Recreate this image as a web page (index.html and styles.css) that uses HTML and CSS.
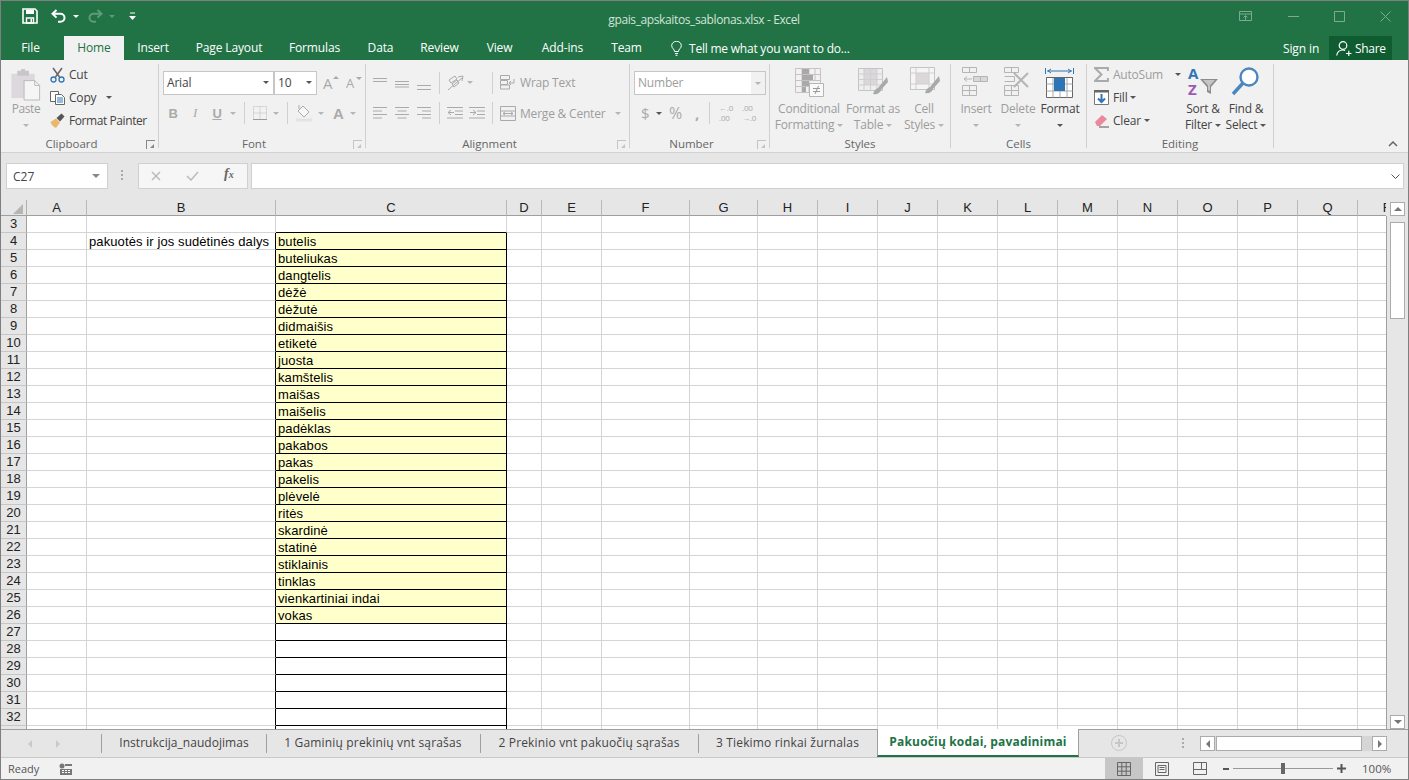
FILE: index.html
```html
<!DOCTYPE html>
<html>
<head>
    <title>gpais_apskaitos_sablonas.xlsx - Excel</title>
    <link rel="stylesheet" href="styles.css">
</head>
<body>
<div class="window">
    <!-- title bar -->
    <div class="titlebar">
        <div class="qat">
            <svg class="q-save" width="16" height="16" viewBox="0 0 16 16"><path d="M1 1h12l2 2v12H1z" fill="none" stroke="#fff" stroke-width="1.6"/><path d="M4 1.500h8v4.500H4z" fill="#fff"/><path d="M4.500 10h7v5h-7z" fill="none" stroke="#fff" stroke-width="1.400"/><path d="M8.500 11h1.500v3H8.500z" fill="#fff"/></svg>
            <svg class="q-undo" width="16" height="14" viewBox="0 0 16 14"><path d="M5.500 1 1.500 4.800l4 3.800M2 4.800h7.500a4 4 0 0 1 0 8H7" fill="none" stroke="#fff" stroke-width="2"/></svg>
            <span class="caret-w q-c1"></span>
            <svg class="q-redo" width="16" height="14" viewBox="0 0 16 14"><path d="M10.500 1l4 3.800-4 3.800M14 4.800H6.500a4 4 0 0 0 0 8H9" fill="none" stroke="#5f9a7b" stroke-width="2"/></svg>
            <span class="caret-w q-c2"></span>
            <svg class="q-more" width="7" height="9" viewBox="0 0 7 9"><path d="M1 1h5" stroke="#fff"/><path d="M0 4h7L3.500 8z" fill="#fff"/></svg>
        </div>
        <div class="doc-title">gpais_apskaitos_sablonas.xlsx - Excel</div>
        <div class="win-btns">
            <svg width="14" height="11" viewBox="0 0 14 11"><path d="M.5.500h12v9H.5zM.5 3h12M6.500 9V5M4.500 6.500l2-2 2 2" fill="none" stroke="#7fab94"/></svg>
            <svg width="11" height="11" viewBox="0 0 11 11"><path d="M0 5.500h11" stroke="#7fab94"/></svg>
            <svg width="11" height="11" viewBox="0 0 11 11"><path d="M.5.500h10v10H.5z" fill="none" stroke="#7fab94"/></svg>
            <svg width="11" height="11" viewBox="0 0 11 11"><path d="M.5.500l10 10M10.500.500l-10 10" stroke="#7fab94"/></svg>
        </div>
    </div>

    <!-- ribbon tabs -->
    <div class="tabs">
        <span class="tab t-file">File</span>
        <span class="tab t-home">Home</span>
        <span class="tab t-insert">Insert</span>
        <span class="tab t-layout">Page Layout</span>
        <span class="tab t-formulas">Formulas</span>
        <span class="tab t-data">Data</span>
        <span class="tab t-review">Review</span>
        <span class="tab t-view">View</span>
        <span class="tab t-addins">Add-ins</span>
        <span class="tab t-team">Team</span>
        <span class="tell">
            <svg width="11" height="15" viewBox="0 0 11 15"><path d="M3.500 10.500C3.500 8 .7 7.500.7 4.500a4.800 4.200 0 0 1 9.600 0c0 3-2.800 3.500-2.800 6zM4 12.500h3M4.500 14.300h2" fill="none" stroke="#fff"/></svg>
            Tell me what you want to do...
        </span>
        <span class="signin">Sign in</span>
        <span class="share">
            <svg width="16" height="15" viewBox="0 0 16 15"><circle cx="7" cy="4.500" r="3.800" fill="none" stroke="#fff" stroke-width="1.200"/><path d="M.7 14.500c.5-3.500 3-5.500 6.300-5.500 1 0 1.500.1 2.200.4M10 12.500h5.500M12.800 9.800v5.200" fill="none" stroke="#fff" stroke-width="1.200"/></svg>
            Share
        </span>
    </div>

    <!-- ribbon -->
    <div class="ribbon">
        <div class="group g-clipboard">
            <div class="body">
                <div class="big paste">
                    <svg width="32" height="36" viewBox="0 0 32 36"><path d="M1 8h24v25H1z" fill="#dcd8dc"/><path d="M7 5h4V3h4v2h4v5H7z" fill="#c9c5c9"/><path d="M14 15h11l5 5v15H14z" fill="#f5f5f5" stroke="#b9b9b9"/><path d="M25 15v5h5" fill="none" stroke="#b9b9b9"/></svg>
                    <span class="dim">Paste</span>
                    <span class="caret-g"></span>
                </div>
                <div class="smalls">
                    <div class="small"><svg width="15" height="16" viewBox="0 0 15 16"><path d="M3 1l6.500 9M12 1 5.500 10" stroke="#666" stroke-width="1.500"/><circle cx="3.500" cy="12.500" r="2.500" fill="none" stroke="#2e75b6" stroke-width="1.300"/><circle cx="11.500" cy="12.500" r="2.500" fill="none" stroke="#2e75b6" stroke-width="1.300"/></svg><span>Cut</span></div>
                    <div class="small"><svg width="15" height="15" viewBox="0 0 15 15"><path d="M.5 1.500h8v10h-8z" fill="#fff" stroke="#666"/><path d="M5.500 4.500h6l3 3v7h-9z" fill="#fff" stroke="#666"/><path d="M7 8h6M7 10h6M7 12h6" stroke="#2e75b6"/></svg><span>Copy</span><i class="caret-d cp"></i></div>
                    <div class="small"><svg width="15" height="15" viewBox="0 0 15 15"><path d="M.5 9 6 5.500l4 4L6 15c-1-.5-2-1-3.500-2.500C1.500 11.500 1 10.500.5 9z" fill="#e8b96a"/><path d="M6.500 5 11.500.5l3 3-4.500 5z" fill="#555"/></svg><span class="painter">Format Painter</span></div>
                </div>
            </div>
            <div class="label launchable">Clipboard<i class="launch"></i></div>
        </div>

        <div class="group g-font">
            <div class="body col">
                <div class="row r-top">
                    <div class="select font-name"><span>Arial</span><i class="caret-d"></i></div>
                    <div class="select font-size"><span>10</span><i class="caret-d"></i></div>
                    <span class="grow-a">A<i class="tri-up"></i></span>
                    <span class="shrink-a">A<i class="tri-down"></i></span>
                </div>
                <div class="row r-bot font-tools">
                    <b class="fmt f-b">B</b>
                    <em class="fmt f-i">I</em>
                    <u class="fmt f-u">U</u>
                    <i class="caret-g f-c1"></i>
                    <span class="sep f-s1"></span>
                    <svg class="f-border" width="14" height="14" viewBox="0 0 14 14"><path d="M.5.500h13v13H.5zM7 .5v13M.5 7h13" fill="none" stroke="#bbb" stroke-dasharray="1 1"/><path d="M0 13.500h14" stroke="#999"/></svg>
                    <i class="caret-g f-c2"></i>
                    <span class="sep f-s2"></span>
                    <svg class="f-fill" width="17" height="17" viewBox="0 0 17 17"><path d="M7 1l6 6-5 5-6-6z" fill="#f7f7f7" stroke="#aaa"/><path d="M3 0v4" stroke="#aaa"/><path d="M0 13.500h16v3H0z" fill="#e3e3e3"/></svg>
                    <i class="caret-g f-c3"></i>
                    <b class="font-a">A</b>
                    <i class="caret-g f-c4"></i>
                </div>
            </div>
            <div class="label launchable">Font<i class="launch off"></i></div>
        </div>

        <div class="group g-align">
            <div class="body col">
                <div class="row r-top al-top">
                    <svg class="al a1" width="14" height="14" viewBox="0 0 14 14"><path d="M0 2.500h14M0 5.500h14" stroke="#aaa"/></svg>
                    <svg class="al a2" width="14" height="14" viewBox="0 0 14 14"><path d="M0 5.500h14M0 8.500h14M0 11h14" stroke="#aaa"/></svg>
                    <svg class="al a3" width="14" height="14" viewBox="0 0 14 14"><path d="M0 9.500h14M0 13.500h14" stroke="#aaa"/></svg>
                    <span class="sep a-s1"></span>
                    <svg class="a-orient" width="17" height="16" viewBox="0 0 17 16"><path d="M1 15 15 3M11 2l5-1-1 5" fill="none" stroke="#aaa"/><path d="M2 5l6-4 2 3-6 4zM5 9l5-4 2 3-5 4z" fill="none" stroke="#aaa"/></svg>
                    <i class="caret-g a-c"></i>
                    <span class="sep a-s2"></span>
                    <svg class="a-wrap" width="16" height="15" viewBox="0 0 16 15"><path d="M.5.500h9v4h-9zM.5 5.500h7v4h-7zM.5 10h9v4h-9zM9 8h5V4M9 8l2-2M9 8l2 2" fill="none" stroke="#aaa"/></svg>
                    <span class="dim a-text">Wrap Text</span>
                </div>
                <div class="row r-bot">
                    <svg class="al a1" width="14" height="12" viewBox="0 0 14 12"><path d="M0 .5h14M0 4h9M0 7.500h14M0 11h9" stroke="#aaa"/></svg>
                    <svg class="al a2" width="14" height="12" viewBox="0 0 14 12"><path d="M0 .5h14M2.500 4h9M0 7.500h14M2.500 11h9" stroke="#aaa"/></svg>
                    <svg class="al a3" width="14" height="12" viewBox="0 0 14 12"><path d="M0 .5h14M5 4h9M0 7.500h14M5 11h9" stroke="#aaa"/></svg>
                    <span class="sep a-s1"></span>
                    <svg class="a-ind1" width="16" height="12" viewBox="0 0 16 12"><path d="M0 .5h16M8 4h8M8 7.500h8M0 11h16M7 5.500H1M4 3 1 5.500 4 8" fill="none" stroke="#aaa"/></svg>
                    <svg class="a-ind2" width="16" height="12" viewBox="0 0 16 12"><path d="M0 .5h16M8 4h8M8 7.500h8M0 11h16M1 5.500h6M4 3l3 2.500L4 8" fill="none" stroke="#aaa"/></svg>
                    <span class="sep a-s3"></span>
                    <svg class="a-merge" width="16" height="15" viewBox="0 0 16 15"><path d="M.5.500h15v14H.5zM.5 5h15M.5 10h15M3 7.500h10M5 5.800 3 7.500l2 1.700M11 5.800l2 1.700-2 1.700" fill="none" stroke="#aaa"/></svg>
                    <span class="dim a-text">Merge &amp; Center</span>
                    <i class="caret-g a-c2"></i>
                </div>
            </div>
            <div class="label launchable">Alignment<i class="launch off"></i></div>
        </div>

        <div class="group g-number">
            <div class="body col">
                <div class="row r-top">
                    <div class="select num-select"><span>Number</span><i class="num-arrow"><i class="caret-g"></i></i></div>
                </div>
                <div class="row r-bot">
                    <span class="n-dollar">$</span>
                    <i class="caret-d n-c"></i>
                    <span class="n-pct">%</span>
                    <span class="n-comma">,</span>
                    <span class="sep n-s"></span>
                    <span class="n-dec">←.0<br>.00</span>
                    <span class="n-dec n-dec2">.00<br>→.0</span>
                </div>
            </div>
            <div class="label launchable">Number<i class="launch off"></i></div>
        </div>

        <div class="group g-styles">
            <div class="body">
                <div class="big b-cond">
                    <svg width="32" height="36" viewBox="0 0 32 36"><g transform="translate(2 4)"><path d="M.5.500h25v24H.5z" fill="#f4f0f4" stroke="#c4c4c4"/><path d="M7 .5v24M14 .5v24M20 .5v12M.5 6.500h25M.5 12.500h25M.5 18.500h14" stroke="#c4c4c4"/><path d="M7 1h7v5H7zM7 7h11v5H7zM7 13h7v5H7zM7 19h4v5H7z" fill="#a9a9a9"/><path d="M14.500 15.500h14v13h-14z" fill="#f9f9f9" stroke="#b5b5b5"/><path d="M18 20.500h7M18 23.500h7M23.500 18l-3.500 8" stroke="#999"/></g></svg>
                    <span class="dim">Conditional</span><span class="dim">Formatting<i class="caret-g in"></i></span>
                </div>
                <div class="big b-table">
                    <svg width="32" height="36" viewBox="0 0 32 36"><g transform="translate(1 4)"><path d="M.5.500h24v22H.5z" fill="#eee" stroke="#c4c4c4"/><path d="M6 1h13v16H6z" fill="#dbd7db"/><path d="M6 .5v22M12.500 .5v22M19 .5v22M.5 6h24M.5 11.500h24M.5 17h24" stroke="#cfcfcf"/><path d="M29 9 20 20l2 3 8-9zM20 20c-3 1-4 3-5 6 4 1 7-1 8-4z" fill="#a9a9a9"/></g></svg>
                    <span class="dim">Format as</span><span class="dim">Table<i class="caret-g in"></i></span>
                </div>
                <div class="big b-cell">
                    <svg width="32" height="36" viewBox="0 0 32 36"><g transform="translate(2 3)"><path d="M.5.500h24v22H.5z" fill="#f5f5f5" stroke="#c4c4c4"/><path d="M6 6h13v11H6z" fill="#dbd7db"/><path d="M6 .5v22M19 .5v22M.5 6h24M.5 17h24" stroke="#cfcfcf"/><path d="M29 9 20 20l2 3 8-9zM20 20c-3 1-4 3-5 6 4 1 7-1 8-4z" fill="#a9a9a9"/></g></svg>
                    <span class="dim">Cell</span><span class="dim">Styles<i class="caret-g in"></i></span>
                </div>
            </div>
            <div class="label">Styles</div>
        </div>

        <div class="group g-cells">
            <div class="body">
                <div class="big b-cellbtn">
                    <svg width="32" height="36" viewBox="0 0 32 36"><g fill="none" stroke="#b5b5b5" transform="translate(2 3)"><path d="M.5.500h14v5h-14zM7.500 .5v5M.5 18.500h14v10h-14zM7.500 18.500v10M.5 23.500h14"/><path d="M11.500 9.500h14v5h-14z" fill="#d8d8d8"/><path d="M18.500 9.500v5M10 12H2M5 9.500 2 12l3 2.500"/></g></svg>
                    <span class="dim">Insert</span><i class="caret-g"></i>
                </div>
                <div class="big b-cellbtn">
                    <svg width="32" height="36" viewBox="0 0 32 36"><g fill="none" stroke="#b5b5b5" transform="translate(2 3)"><path d="M.5.500h14v5h-14zM7.500 .5v5M.5 18.500h14v10h-14zM7.500 18.500v10M.5 23.500h14M.5 9.500h10v5H.5"/><path d="M10 6 24 20M24 6 10 20" stroke-width="2"/></g></svg>
                    <span class="dim">Delete</span><i class="caret-g"></i>
                </div>
                <div class="big b-cellbtn">
                    <svg width="30" height="36" viewBox="0 0 30 36"><path d="M.5 4v6M28.500 4v6M2 7h25M6 5 3 7l3 2M23 5l3 2-3 2" fill="none" stroke="#2e75b6"/><path d="M1.500 13.500h26v20h-26z" fill="#fff" stroke="#666"/><path d="M8 13.500v20M15 13.500v20M22 13.500v20M1.500 20h26M1.500 27h26" stroke="#aaa"/><path d="M1.500 13.500h26" stroke="#666" fill="none"/><path d="M9 14h11v13H9z" fill="#2e75b6"/></svg>
                    <span class="dark">Format</span><i class="caret-d"></i>
                </div>
            </div>
            <div class="label">Cells</div>
        </div>

        <div class="group g-edit">
            <div class="body">
                <div class="smalls edit-list">
                    <div class="small"><svg width="15" height="15" viewBox="0 0 15 15"><path d="M14 4V1H1l6.500 6.500L1 14h13v-3" fill="none" stroke="#aaa" stroke-width="2"/></svg><span class="dim">AutoSum</span><i class="caret-d ed"></i></div>
                    <div class="small"><svg width="15" height="15" viewBox="0 0 15 15"><path d="M.5.500h14v14H.5z" fill="#fff" stroke="#777"/><path d="M0 0h15v2.500H0z" fill="#666"/><path d="M7.500 4v8M4 8.500l3.500 3.500L11 8.500" fill="none" stroke="#2e75b6" stroke-width="2"/></svg><span>Fill</span><i class="caret-d tight"></i></div>
                    <div class="small"><svg width="15" height="15" viewBox="0 0 15 15"><path d="M1 9l7-7 5 4-7 7H3z" fill="#e88a9c"/><path d="M5 14h10" stroke="#555"/></svg><span>Clear</span><i class="caret-d tight"></i></div>
                </div>
                <div class="big b-sort">
                    <svg width="32" height="36" viewBox="0 0 32 36"><path d="M13 15h18l-7 8v7l-4-2v-5z" fill="#8c8c8c"/><path d="M16 16h12l-5 5.500V27l-2-1v-4.500z" fill="#c5c5c5"/><text x="1" y="15" class="az a-blue">A</text><text x="1" y="31" class="az z-purple">Z</text></svg>
                    <span>Sort &amp;</span><span>Filter<i class="caret-d in"></i></span>
                </div>
                <div class="big b-find">
                    <svg width="32" height="36" viewBox="0 0 32 36"><circle cx="19" cy="13" r="8.500" fill="#fff" stroke="#4a86c0" stroke-width="2.400"/><path d="M13 19 3 30" stroke="#4a86c0" stroke-width="3.400"/></svg>
                    <span>Find &amp;</span><span>Select<i class="caret-d in"></i></span>
                </div>
            </div>
            <div class="label">Editing</div>
        </div>
        <svg class="collapse" width="10" height="6" viewBox="0 0 10 6"><path d="M1 5l4-4 4 4" fill="none" stroke="#666" stroke-width="1.500"/></svg>
    </div>

    <!-- formula bar -->
    <div class="formula">
        <div class="namebox"><span>C27</span><i class="name-arrow"></i></div>
        <div class="grip"></div>
        <div class="fx-box">
            <svg width="10" height="10" viewBox="0 0 10 10"><path d="M1 1l8 8M9 1 1 9" stroke="#bbb" stroke-width="1.500"/></svg>
            <svg width="13" height="10" viewBox="0 0 13 10"><path d="M1 5l4 4 7-8" fill="none" stroke="#bbb" stroke-width="1.500"/></svg>
            <span class="fx">f<span class="fx-x">x</span></span>
        </div>
        <div class="input"><svg width="9" height="5" viewBox="0 0 9 5"><path d="M.5.500l4 4 4-4" fill="none" stroke="#555"/></svg></div>
    </div>

    <!-- sheet -->
    <div class="sheet">
        <div class="grid" id="grid"></div>
        <div class="edge"></div>
        <div class="vscroll">
            <div class="sb-btn"><i class="tri-u"></i></div>
            <div class="sb-thumb"></div>
            <div class="sb-btn sb-down"><i class="tri-d"></i></div>
        </div>
    </div>

    <!-- sheet tabs -->
    <div class="sheetbar">
        <div class="nav-arrows"><i class="tri-l"></i><i class="tri-r"></i></div>
        <div class="stab st1">Instrukcija_naudojimas</div>
        <div class="stab st2">1 Gaminių prekinių vnt sąrašas</div>
        <div class="stab st3">2 Prekinio vnt pakuočių sąrašas</div>
        <div class="stab st4">3 Tiekimo rinkai žurnalas</div>
        <div class="stab active">Pakuočių kodai, pavadinimai</div>
        <svg class="add" width="16" height="16" viewBox="0 0 16 16"><circle cx="8" cy="8" r="7.500" fill="none" stroke="#c6c6c6"/><path d="M8 4v8M4 8h8" stroke="#c6c6c6" stroke-width="2"/></svg>
        <div class="grip g2"></div>
        <div class="hscroll">
            <div class="sb-btn h"><i class="tri-lk"></i></div>
            <div class="h-thumb"></div>
            <div class="sb-btn h h-end"><i class="tri-rk"></i></div>
        </div>
    </div>

    <!-- status bar -->
    <div class="status">
        <span class="ready">Ready</span>
        <svg class="macro" width="13" height="12" viewBox="0 0 13 12"><circle cx="3" cy="3" r="2.500" fill="#777"/><path d="M6 1h7v2H6zM1 6h12v6H1z" fill="#777"/><path d="M3 7.500h2M6 7.500h2M9 7.500h2M3 9.500h2M6 9.500h2M9 9.500h2" stroke="#fff"/></svg>
        <div class="views">
            <span class="view on"><svg width="14" height="14" viewBox="0 0 14 14"><path d="M.5.500h13v13H.5zM4.800 .5v13M9.200 .5v13M.5 4.800h13M.5 9.200h13" fill="none" stroke="#666"/></svg></span>
            <span class="view"><svg width="14" height="14" viewBox="0 0 14 14"><path d="M.5.500h13v13H.5z" fill="none" stroke="#666"/><path d="M3 3.500h8v7H3zM4.500 5.500h5M4.500 7.500h5" fill="none" stroke="#666"/></svg></span>
            <span class="view"><svg width="14" height="14" viewBox="0 0 14 14"><path d="M.5.500h13v12H.5zM8.500 .5v7H.5M8.500 7.500h5" fill="none" stroke="#666"/></svg></span>
        </div>
        <div class="zoom">
            <span class="z-minus"></span>
            <div class="z-track"><span class="z-thumb"></span></div>
            <svg width="9" height="9" viewBox="0 0 9 9"><path d="M0 4.500h9M4.500 0v9" stroke="#555" stroke-width="2"/></svg>
            <span class="z-val">100%</span>
        </div>
    </div>
</div>
<script src="script.js"></script>
</body>
</html>
```

FILE: styles.css
```css
* {
    box-sizing: border-box;
}
html, body {
    margin: 0;
    height: 100%;
    overflow: hidden;
}
body {
    font-family: "Open Sans", "Noto Sans", sans-serif;
    font-size: 12px;
    color: #444;
}
i {
    font-style: normal;
}
.window {
    width: 1409px;
    height: 780px;
    border: 1px solid #7f7f7f;
    display: flex;
    flex-direction: column;
    background: #f1f1f1;
}

/* title bar */
.titlebar {
    height: 35px;
    background: #217346;
    display: flex;
    align-items: center;
    color: #d3e3da;
    position: relative;
}
.qat {
    width: 352px;
    display: flex;
    align-items: center;
    padding-left: 21px;
    height: 100%;
    padding-bottom: 5px;
}
.q-undo { margin-left: 13px; }
.q-c1 { margin-left: 6px; }
.q-redo { margin-left: 8px; }
.q-c2 { margin-left: 6px; border-top-color: #5f9a7b !important; }
.q-more { margin-left: 14px; }
.caret-w {
    width: 0;
    height: 0;
    border: 3px solid transparent;
    border-top: 3px solid #fff;
    border-bottom: 0;
}
.doc-title {
    flex: 1;
    text-align: center;
    padding: 2px 1px 0 0;
    letter-spacing: -.38px;
}
.win-btns {
    width: 352px;
    display: flex;
    justify-content: flex-end;
    align-items: center;
    gap: 35px;
    padding-right: 17px;
    padding-bottom: 4px;
}

/* ribbon tabs */
.tabs {
    height: 24px;
    background: #217346;
    display: flex;
    align-items: center;
    color: #fff;
    white-space: nowrap;
    letter-spacing: -.12px;
}
.tab {
    height: 100%;
    line-height: 23px;
    text-align: center;
    flex: none;
}
.t-file { width: 63px; padding-right: 4px; }
.t-home { width: 60px; background: #f1f1f1; color: #217346; }
.t-insert { width: 58px; }
.t-layout { width: 94px; }
.t-formulas { width: 77px; }
.t-data { width: 55px; }
.t-review { width: 63px; }
.t-view { width: 57px; }
.t-addins { width: 69px; }
.t-team { width: 59px; }
.tell {
    margin-left: 15px;
    display: flex;
    align-items: center;
    gap: 7px;
    width: 612px;
    letter-spacing: -.22px;
}
.signin {
    width: 45px;
}
.share {
    width: 63px;
    margin-left: 1px;
    height: 100%;
    background: #0f5c30;
    display: flex;
    align-items: center;
    gap: 3px;
    padding-left: 7px;
    letter-spacing: -.3px;
}

/* ribbon */
.ribbon {
    height: 93px;
    border-bottom: 1px solid #d2d2d2;
    padding-top: 4px;
    display: flex;
    position: relative;
    letter-spacing: -.2px;
}
.group {
    height: 84px;
    border-right: 1px solid #d0d0d0;
    flex: none;
    display: flex;
    flex-direction: column;
    position: relative;
}
.g-clipboard { width: 158px; }
.g-font { width: 207px; }
.g-align { width: 264px; }
.g-number { width: 140px; }
.g-styles { width: 181px; }
.g-cells { width: 136px; }
.g-edit { width: 187px; }
.body {
    height: 72px;
    display: flex;
}
.body.col {
    flex-direction: column;
    padding-top: 7px;
}
.label {
    text-align: center;
    line-height: 16px;
    height: 12px;
    color: #666;
    font-size: 11.5px;
    letter-spacing: 0;
}
.label.launchable {
    padding-right: 16px;
}
.launch {
    position: absolute;
    right: 3px;
    bottom: -1px;
    width: 9px;
    height: 9px;
    border-left: 1px solid #888;
    border-top: 1px solid #888;
}
.launch::after {
    content: "";
    display: block;
    margin: 3px 0 0 3px;
    width: 0;
    height: 0;
    border-left: 4px solid transparent;
    border-bottom: 4px solid #888;
}
.launch.off {
    border-color: #c4c4c4;
}
.launch.off::after {
    border-bottom-color: #c4c4c4;
}
.dim { color: #9d9d9d; }
.dark { color: #444; }
.big {
    flex: none;
    display: flex;
    flex-direction: column;
    align-items: center;
    line-height: 16px;
    white-space: nowrap;
}
.big svg {
    height: 36px;
    flex: none;
    margin-bottom: 1px;
}
.big > .caret-g, .big > .caret-d {
    margin-top: 7px;
}
.caret-g, .caret-d {
    display: inline-block;
    width: 0;
    height: 0;
    border-left: 3px solid transparent;
    border-right: 3px solid transparent;
    border-top: 3px solid #b5b5b5;
}
.caret-d {
    border-top-color: #555;
}
.in {
    margin-left: 3px;
    vertical-align: middle;
}
.tight {
    margin-left: -1px;
}
.paste { width: 32px; margin-left: 9px; letter-spacing: -.4px; }
.paste svg { margin-top: 2px; margin-bottom: 0; height: 35px; }
.smalls {
    margin-top: -1px;
    margin-left: 8px;
    display: flex;
    flex-direction: column;
}
.small {
    height: 23px;
    display: flex;
    align-items: center;
    gap: 4px;
    white-space: nowrap;
}
.painter { letter-spacing: -.42px; }
.cp { margin-left: 6px; }
.row {
    display: flex;
    align-items: center;
    flex: none;
    position: relative;
}
.r-top { height: 24px; padding-bottom: 1px; }
.r-bot { height: 22px; margin-top: 7px; }
.sep {
    width: 1px;
    height: 22px;
    background: #d0d0d0;
    flex: none;
}

/* font */
.select {
    height: 24px;
    background: #fff;
    border: 1px solid #c6c6c6;
    display: flex;
    align-items: center;
    justify-content: space-between;
    padding: 0 4px 1px 3px;
    flex: none;
    margin-bottom: -1px;
}
.font-name { width: 111px; margin-left: 4px; }
.font-size { width: 43px; }
.grow-a, .shrink-a {
    color: #aaa;
    font-size: 15px;
    position: relative;
    flex: none;
}
.grow-a { margin-left: 6px; width: 23px; }
.shrink-a { font-size: 13px; width: 14px; }
.tri-up, .tri-down {
    position: absolute;
    left: 10px;
    top: 3px;
    width: 0;
    height: 0;
    border-left: 3px solid transparent;
    border-right: 3px solid transparent;
}
.tri-up { border-bottom: 3px solid #aaa; }
.tri-down { border-top: 3px solid #aaa; }
.font-tools .fmt {
    font-family: "Liberation Sans", sans-serif;
    color: #aaa;
    font-size: 13px;
    flex: none;
    width: 10px;
    text-align: center;
}
.f-b { margin-left: 9px; font-weight: bold; }
.f-i { margin-left: 12px; font-family: "Liberation Serif", serif !important; }
.f-u { margin-left: 12px; font-weight: bold; }
.f-c1 { margin-left: 8px; }
.f-s1 { margin-left: 8px; }
.f-border { margin-left: 8px; }
.f-c2 { margin-left: 6px; }
.f-s2 { margin-left: 8px; }
.f-fill { margin-left: 8px; }
.f-c3 { margin-left: 5px; }
.font-a {
    color: #aaa;
    font-family: "Liberation Sans", sans-serif;
    font-size: 15px;
    margin-left: 9px;
}
.f-c4 { margin-left: 6px; }

/* alignment */
.al { flex: none; }
.g-align .a1 { margin-left: 7px; }
.g-align .a2 { margin-left: 8px; }
.g-align .a3 { margin-left: 8px; }
.a-s1 { margin-left: 8px; }
.a-orient { margin-left: 7px; }
.a-c { margin-left: 3px; }
.a-s2 { margin-left: 19px; }
.a-wrap { margin-left: 7px; margin-right: 4px; flex: none; }
.a-merge { margin-left: 7px; margin-right: 4px; flex: none; }
.a-text { white-space: nowrap; }
.a-ind1 { margin-left: 7px; }
.a-ind2 { margin-left: 6px; }
.a-s3 { margin-left: 7px; }
.a-c2 { margin-left: 10px; }

/* number */
.num-select {
    width: 132px;
    margin-left: 4px;
    padding: 0 0 1px 3px;
    color: #9d9d9d;
}
.num-arrow {
    width: 14px;
    height: 22px;
    margin-bottom: -1px;
    background: #f1f1f1;
    display: flex;
    align-items: center;
    justify-content: center;
}
.n-dollar {
    color: #aaa;
    font-size: 15px;
    margin-left: 11px;
    width: 10px;
}
.n-c { margin-left: 5px; }
.n-pct { color: #aaa; font-size: 16px; margin-left: 7px; width: 17px; }
.n-comma { color: #aaa; font-size: 15px; font-weight: bold; margin-left: 9px; width: 6px; line-height: 12px; }
.n-s { margin-left: 8px; }
.n-dec {
    font-size: 8px;
    line-height: 10px;
    color: #aaa;
    width: 15px;
    margin-left: 9px;
    white-space: nowrap;
}
.n-dec2 { margin-left: 8px; }

/* styles, cells, editing */
.b-cond { width: 68px; margin-left: 5px; }
.b-table { width: 60px; }
.b-cell { width: 40px; margin-left: 1px; }
.b-cellbtn { width: 42px; }
.g-cells .body { padding-left: 4px; }
.edit-list { width: 87px; margin-left: 7px; }
.ed { margin-left: 8px; }
.b-sort { width: 44px; }
.b-find { width: 42px; }
.az {
    font-family: "Open Sans", sans-serif;
    font-size: 15px;
    font-weight: bold;
}
.a-blue { fill: #2e75b6; }
.z-purple { fill: #9b59b6; }
.collapse {
    position: absolute;
    right: 10px;
    bottom: 5px;
}

/* formula bar */
.formula {
    height: 47px;
    background: #e6e6e6;
    display: flex;
    padding: 10px 4px 11px 5px;
}
.namebox {
    width: 102px;
    background: #fff;
    border: 1px solid #d0d0d0;
    display: flex;
    align-items: center;
    justify-content: space-between;
    padding: 0 7px 0 6px;
    font-size: 12px;
}
.name-arrow {
    width: 0;
    height: 0;
    border-left: 4px solid transparent;
    border-right: 4px solid transparent;
    border-top: 4px solid #888;
}
.grip {
    width: 2px;
    margin: 7px 0 7px 13px;
    background: repeating-linear-gradient(#aaa 0 2px, transparent 2px 4px);
}
.fx-box {
    width: 110px;
    margin-left: 15px;
    background: #f6f6f6;
    border: 1px solid #d0d0d0;
    display: flex;
    align-items: center;
    gap: 25px;
    padding-left: 12px;
}
.fx {
    font-family: "Liberation Serif", serif;
    font-style: italic;
    font-weight: bold;
    font-size: 14px;
    line-height: 14px;
    color: #666;
    padding-bottom: 3px;
}
.fx-x { font-size: 10px; }
.input {
    flex: 1;
    margin-left: 3px;
    background: #fff;
    border: 1px solid #d0d0d0;
    display: flex;
    align-items: center;
    justify-content: flex-end;
    padding-right: 3px;
}

/* sheet */
.sheet {
    height: 529px;
    background: #e6e6e6;
    display: flex;
    overflow: hidden;
}
.grid {
    width: 1385px;
    height: 529px;
    overflow: hidden;
    background: #fff;
    display: grid;
    grid-template-columns: 26px 60px 189px 231px 35px 60px 88px 68px repeat(11, 60px);
    grid-template-rows: 16px;
    grid-auto-rows: 17px;
    font-family: "Liberation Sans", Arial, sans-serif;
    font-size: 13px;
    color: #000;
}
.corner, .col-head, .row-head {
    background: #e6e6e6;
    color: #222;
    text-align: center;
}
.corner {
    border-right: 1px solid #b0b0b0;
    border-bottom: 1px solid #9f9f9f;
    padding: 4px 2px 0 12px;
}
.corner i {
    display: block;
    width: 0;
    height: 0;
    border-left: 10px solid transparent;
    border-bottom: 10px solid #b5b5b5;
}
.col-head {
    border-right: 1px solid #b9b9b9;
    border-bottom: 1px solid #9f9f9f;
    line-height: 15px;
}
.row-head {
    border-right: 1px solid #9f9f9f;
    border-bottom: 1px solid #c6c6c6;
    line-height: 16px;
}
.cell {
    border-right: 1px solid #d4d4d4;
    border-bottom: 1px solid #d4d4d4;
    padding-left: 2px;
    line-height: 17px;
    white-space: nowrap;
    letter-spacing: .1px;
}
.box-left {
    border-right-color: #000;
}
.box {
    border-right-color: #000;
    border-bottom-color: #000;
}
.box-top {
    border-bottom-color: #000;
}
.filled {
    background: #ffffcc;
}
.edge {
    width: 1px;
    margin-top: 16px;
    background: #9f9f9f;
    flex: none;
}
.vscroll {
    width: 20px;
    padding: 2px 1px 0 3px;
    display: flex;
    flex-direction: column;
}
.sb-btn {
    height: 14px;
    width: 15px;
    background: #fff;
    border: 1px solid #ababab;
    display: flex;
    align-items: center;
    justify-content: center;
    flex: none;
}
.sb-thumb {
    width: 15px;
    height: 97px;
    margin-top: 6px;
    background: #fff;
    border: 1px solid #ababab;
}
.sb-down {
    margin-top: auto;
}
.tri-u, .tri-d, .tri-l, .tri-r, .tri-lk, .tri-rk {
    display: block;
    width: 0;
    height: 0;
    border: 4px solid transparent;
}
.tri-u { border-bottom-color: #777; border-top: 0; }
.tri-d { border-top-color: #777; border-bottom: 0; }
.tri-l { border-right-color: #c9c9c9; border-left: 0; }
.tri-r { border-left-color: #c9c9c9; border-right: 0; }
.tri-lk { border-right-color: #777; border-left: 0; }
.tri-rk { border-left-color: #777; border-right: 0; }

/* sheet tabs */
.sheetbar {
    height: 28px;
    border-top: 1px solid #9f9f9f;
    background: #e6e6e6;
    display: flex;
    align-items: stretch;
}
.nav-arrows {
    width: 100px;
    display: flex;
    align-items: center;
    gap: 24px;
    padding-left: 27px;
}
.stab {
    flex: none;
    text-align: center;
    color: #444;
    line-height: 25px;
    position: relative;
    white-space: nowrap;
    letter-spacing: .17px;
}
.stab::before {
    content: "";
    position: absolute;
    left: 0;
    top: 4px;
    height: 19px;
    width: 1px;
    background: #9f9f9f;
}
.st1 { width: 165px; letter-spacing: .04px; padding-left: 1px; }
.st2 { width: 214px; }
.st3 { width: 218px; }
.st4 { width: 179px; }
.stab.active {
    width: 202px;
    margin-top: -1px;
    background: #fff;
    color: #217346;
    font-weight: bold;
    border-left: 1px solid #9f9f9f;
    border-right: 1px solid #9f9f9f;
    border-bottom: 2px solid #217346;
    line-height: 26px;
    height: 28px;
}
.stab.active::before {
    display: none;
}
.add {
    margin: 5px 0 0 32px;
    flex: none;
}
.g2 {
    margin: 8px 0 9px 55px;
    flex: none;
}
.hscroll {
    width: 187px;
    height: 15px;
    margin: 6px 0 0 16px;
    background: #d6d6d6;
    display: flex;
    flex: none;
}
.sb-btn.h {
    width: 15px;
    height: 15px;
}
.h-thumb {
    width: 146px;
    margin-left: 1px;
    background: #fff;
    border: 1px solid #ababab;
}
.h-end {
    margin-left: auto;
}

/* status bar */
.status {
    height: 22px;
    border-top: 1px solid #c8c8c8;
    display: flex;
    align-items: center;
    font-size: 11px;
    color: #555;
}
.ready {
    margin-left: 7px;
    width: 51px;
}
.macro {
    flex: none;
}
.views {
    margin-left: 1033px;
    display: flex;
    height: 100%;
}
.view {
    width: 38px;
    display: flex;
    align-items: center;
    justify-content: center;
}
.view.on {
    background: #c6c6c6;
}
.zoom {
    display: flex;
    align-items: center;
    height: 100%;
}
.z-minus {
    width: 6px;
    height: 2px;
    background: #555;
    margin-left: 4px;
}
.z-track {
    width: 100px;
    height: 1px;
    margin: 0 4px;
    background: #999;
    position: relative;
}
.z-thumb {
    position: absolute;
    left: 48px;
    top: -5px;
    width: 4px;
    height: 11px;
    background: #666;
}
.z-val {
    margin-left: 16px;
    font-size: 11.5px;
}
```

FILE: script.js
```js
const grid = document.getElementById('grid');
const columns = 'ABCDEFGHIJKLMNOPQR'.split('');
const items = ['butelis', 'buteliukas', 'dangtelis', 'dėžė', 'dėžutė', 'didmaišis', 'etiketė', 'juosta',
    'kamštelis', 'maišas', 'maišelis', 'padėklas', 'pakabos', 'pakas', 'pakelis', 'plėvelė', 'ritės',
    'skardinė', 'statinė', 'stiklainis', 'tinklas', 'vienkartiniai indai', 'vokas'];

function addCell(className, text) {
    const cell = document.createElement('div');
    cell.className = className;
    if (text) cell.textContent = text;
    grid.appendChild(cell);
    return cell;
}

addCell('corner').innerHTML = '<i></i>';
columns.forEach(name => addCell('col-head', name));

for (let row = 3; row <= 33; row++) {
    addCell('row-head', row <= 32 ? String(row) : '');
    columns.forEach(name => {
        let className = 'cell';
        let text = '';
        if (name === 'B' && row >= 4) {
            className += ' box-left';
            if (row === 4) text = 'pakuotės ir jos sudėtinės dalys';
        }
        if (name === 'C') {
            className += row >= 4 ? ' box' : ' box-top';
            if (row >= 4 && row <= 26) {
                className += ' filled';
                text = items[row - 4];
            }
        }
        addCell(className, text);
    });
}
```
